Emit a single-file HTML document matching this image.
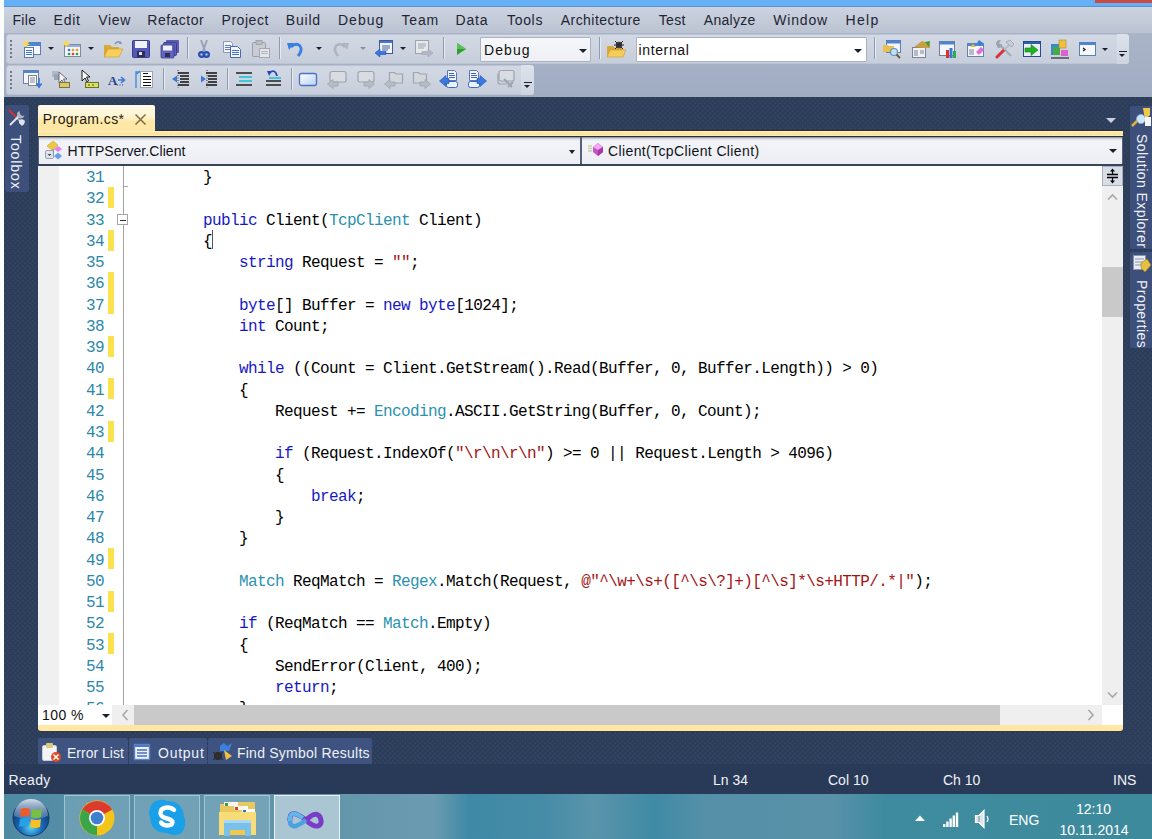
<!DOCTYPE html>
<html><head><meta charset="utf-8">
<style>
*{box-sizing:border-box;margin:0;padding:0}
html,body{width:1152px;height:839px;overflow:hidden}
body{position:relative;background:#2c3d5b;font-family:"Liberation Sans",sans-serif;font-size:14px;color:#1e2432}
.a{position:absolute}
#wcol{left:0;top:0;width:4px;height:839px;background:#fbfcfd}
#title{left:4px;top:0;width:1148px;height:7px;background:#66b0f7;border-bottom:1px solid #5a93c9}
#closeb{left:1095px;top:0;width:57px;height:3px;background:#c94c42}
#menu{left:4px;top:7px;width:1148px;height:26px;background:linear-gradient(#cdd3df,#bbc3d2)}
#menu span{position:absolute;top:4px;font-size:14px;color:#1e2535;line-height:18px}
#tray{left:4px;top:33px;width:1148px;height:64px;background:linear-gradient(#a9b4c7,#a0acc2)}
.tb{position:absolute;border-radius:3px;background:linear-gradient(#d3d9e4,#c7cedb);border:1px solid #bcc4d3}
#dark{left:4px;top:97px;width:1148px;height:697px;background-color:#2c3d5b;
 background-image:radial-gradient(circle at 1.25px 1.25px,#32445f 0.8px,transparent 1.3px),radial-gradient(circle at 3.75px 3.75px,#32445f 0.8px,transparent 1.3px);background-size:5px 5px}

#ttab{left:5px;top:105px;width:24px;height:87px;background:#3d4f7b;border-radius:2px}
.vt{position:absolute;color:#eef1f6;font-size:14px;white-space:nowrap;transform-origin:0 0;transform:rotate(90deg)}
#setab{left:1130px;top:106px;width:22px;height:143px;background:#3d4f7b;border-radius:2px 0 0 2px}
#prtab{left:1130px;top:252px;width:22px;height:96px;background:#3d4f7b;border-radius:2px 0 0 2px}
#dtab{left:38px;top:105px;width:117px;height:27px;border-radius:2px 2px 0 0;background:linear-gradient(#fffbea 0%,#fff3cf 45%,#ffe8a6 60%,#ffe8a6 100%)}
#dtab span{position:absolute;left:4.8px;top:6px;letter-spacing:0.42px;color:#1c1a10;font-size:14px}
#ystrip{left:38px;top:131px;width:1085px;height:5px;background:linear-gradient(#fdf1c6,#fbe59e 35%,#fbe49a 70%,#fdf0c2)}
#nav{left:38px;top:136px;width:1085px;height:30px;background:linear-gradient(#2a3038 0px,#2a3038 1px,#56607a 1px,#56607a 27px,#3a4458 28px)}
.dd{position:absolute;top:1px;height:27px;background:linear-gradient(#7c8596 0px,#dfe3ea 2px,#f3f4f8 4px,#eceef4 100%)}
.dd span{position:absolute;top:6px;font-size:14px;color:#10131a}
.arr{position:absolute;width:0;height:0;border-left:4px solid transparent;border-right:4px solid transparent;border-top:4px solid #1b1f28}
#editor{left:38px;top:166px;width:1085px;height:539px;background:#fff;overflow:hidden}
#margin{left:0;top:0;width:21px;height:539px;background:#f0f0f0}
#code{left:93px;top:2px;font-family:"Liberation Mono",monospace;font-size:16px;letter-spacing:-0.6px;line-height:21.25px;white-space:pre;color:#000}
#lnums{left:44px;top:2px;font-family:"Liberation Mono",monospace;font-size:16px;letter-spacing:-0.6px;line-height:21.25px;white-space:pre;color:#2b88aa;text-align:right;width:22px}
.k{color:#1818c0}.t{color:#2b91af}.s{color:#a31515}
#hsb{left:38px;top:705px;width:1085px;height:20px;background:#efefef}
#ybot{left:38px;top:725px;width:1085px;height:6px;background:#ffe8a6;border-radius:0 0 3px 3px}
#vsb{left:1102px;top:166px;width:21px;height:539px;background:#efefef}
.btab{position:absolute;top:738px;height:26px;background:#3f5380;border-radius:2px 2px 0 0}
.btab span{position:absolute;top:7px;color:#eef1f6;font-size:14px;white-space:nowrap}
.st{position:absolute;top:772px;color:#f0f2f6;font-size:14px}
#taskbar{left:4px;top:794px;width:1148px;height:45px;overflow:hidden;background:linear-gradient(90deg,#4f8aa3 0px,#5a91a8 120px,#6496ab 330px,#6a9bb0 430px,#3f89a6 465px,#468ca7 540px,#5a94aa 590px,#3f8aa5 650px,#5590a8 700px,#5891a8 830px,#3e8ba0 880px,#3f8b9e 1000px,#3d8a9c 1148px)}
.cmb{position:absolute;background:linear-gradient(#f6f7fa,#eef0f5);border:1px solid #a9b2c2;border-radius:1px}
.cmb span{position:absolute;top:4px;font-size:14px;color:#111}
</style></head><body>
<div class="a" id="dark"></div>
<div class="a" id="wcol"></div>
<div class="a" style="left:4px;top:764px;width:1148px;height:30px;background:#293a58"></div>
<div class="a" id="title"></div>
<div class="a" id="closeb"></div>
<div class="a" id="menu">
<span style="left:8.5px;letter-spacing:0.30px">File</span><span style="left:49.6px;letter-spacing:0.73px">Edit</span><span style="left:94.3px;letter-spacing:0.63px">View</span><span style="left:143.3px;letter-spacing:0.49px">Refactor</span><span style="left:217.5px;letter-spacing:0.55px">Project</span><span style="left:281.8px;letter-spacing:0.80px">Build</span><span style="left:334.0px;letter-spacing:1.00px">Debug</span><span style="left:397.4px;letter-spacing:0.87px">Team</span><span style="left:451.6px;letter-spacing:0.80px">Data</span><span style="left:503.0px;letter-spacing:0.68px">Tools</span><span style="left:556.8px;letter-spacing:0.44px">Architecture</span><span style="left:654.7px;letter-spacing:0.33px">Test</span><span style="left:699.8px;letter-spacing:0.28px">Analyze</span><span style="left:769.3px;letter-spacing:0.82px">Window</span><span style="left:841.5px;letter-spacing:1.30px">Help</span>
</div>
<div class="a" id="tray"></div>
<div class="tb" style="left:6px;top:34px;width:1123px;height:30px"></div>
<div class="tb" style="left:6px;top:65px;width:528px;height:30px"></div>
<!--TB-->
<div class="a" style="left:10px;top:40px;width:2px;height:2px;background:#6d7a90"></div><div class="a" style="left:10px;top:44px;width:2px;height:2px;background:#6d7a90"></div><div class="a" style="left:10px;top:48px;width:2px;height:2px;background:#6d7a90"></div><div class="a" style="left:10px;top:52px;width:2px;height:2px;background:#6d7a90"></div><div class="a" style="left:10px;top:56px;width:2px;height:2px;background:#6d7a90"></div>
<svg class="a" style="left:22px;top:39px" width="20" height="20" viewBox="0 0 20 20"><rect x="4.5" y="3.5" width="14" height="12" fill="#f4f8fd" stroke="#5a7fb8"/><rect x="5" y="4" width="13" height="3" fill="#4c86d6"/><rect x="2.5" y="8.5" width="9" height="10" fill="#f4f7fc" stroke="#5c79a8"/><path d="M4 11.5h6M4 13.5h6M4 15.5h6" stroke="#3e70c8"/><path d="M4 0.5 L5 3 L7.5 2 L6 4.5 L8 6 L5.5 6 L4.5 8.5 L3.5 6 L0.5 6.5 L2.5 4.5 L1 2 L3.5 3 Z" fill="#ffd83a"/></svg>
<div class="arr" style="left:48px;top:47px;border-top-color:#1b2030;border-left-width:3.5px;border-right-width:3.5px;border-top-width:3.5px"></div>
<svg class="a" style="left:62px;top:39px" width="20" height="20" viewBox="0 0 20 20"><rect x="2.5" y="5.5" width="16" height="12" fill="#f2f4f8" stroke="#7d8aa0"/><rect x="3" y="6" width="15" height="2" fill="#8fb0e0"/><circle cx="7" cy="11" r="1.3" fill="#4f70d8"/><circle cx="11" cy="11" r="1.3" fill="#e0a020"/><circle cx="15" cy="11" r="1.3" fill="#e0a020"/><circle cx="7" cy="15" r="1.3" fill="#30a040"/><circle cx="11" cy="15" r="1.3" fill="#e04020"/><circle cx="15" cy="15" r="1.3" fill="#30a040"/><path d="M4 0.5 L5 3 L7.5 2 L6 4.5 L8 6 L5.5 6 L4.5 8.5 L3.5 6 L0.5 6.5 L2.5 4.5 L1 2 L3.5 3 Z" fill="#ffd83a"/></svg>
<div class="arr" style="left:88px;top:47px;border-top-color:#1b2030;border-left-width:3.5px;border-right-width:3.5px;border-top-width:3.5px"></div>
<svg class="a" style="left:103px;top:39px" width="20" height="20" viewBox="0 0 20 20"><path d="M1 6h6l2 2h7v10H1z" fill="#d9a93a"/><path d="M1 18 L5 10 H20 L16 18 Z" fill="#f7cf5a" stroke="#c99a2a" stroke-width="0.6"/><path d="M12 5 Q15 1 18 4" stroke="#7f93b8" stroke-width="1.6" fill="none"/><path d="M17 2 l2 3 l-3 0z" fill="#7f93b8"/></svg>
<svg class="a" style="left:131px;top:39px" width="20" height="20" viewBox="0 0 20 20"><rect x="1.5" y="1.5" width="17" height="17" rx="1" fill="#5458b8" stroke="#3a3e8e"/><rect x="4" y="2" width="12" height="7" fill="#f2f3fa"/><rect x="6" y="12" width="8" height="6" fill="#2e2f55"/><rect x="8" y="13" width="3" height="3" fill="#e0e0f0"/></svg>
<svg class="a" style="left:160px;top:39px" width="20" height="20" viewBox="0 0 20 20"><rect x="6" y="1" width="13" height="13" rx="1" fill="#5a5cb4"/><rect x="3.5" y="3.5" width="13" height="13" rx="1" fill="#5b5eb8" stroke="#3d3f8a"/><rect x="1" y="6" width="13" height="13" rx="1" fill="#6366c0" stroke="#3d3f8a" stroke-width="0.8"/><rect x="3" y="6.5" width="9" height="5" fill="#f0f0fa"/><rect x="5" y="14" width="5" height="4" fill="#2e2f55"/></svg>
<div class="a" style="left:187px;top:37px;width:1px;height:22px;background:#8f9bb0;box-shadow:1px 0 0 #e6eaf1"></div>
<svg class="a" style="left:194px;top:39px" width="20" height="20" viewBox="0 0 20 20"><path d="M7 1 L11 12 M13 1 L9 12" stroke="#9aa2b4" stroke-width="2"/><circle cx="7.5" cy="15.5" r="2.8" fill="#3b64c8" stroke="#2a4aa8" stroke-width="1.4"/><circle cx="12.5" cy="15.5" r="2.8" fill="#3b64c8" stroke="#2a4aa8" stroke-width="1.4"/><circle cx="7.5" cy="15.5" r="1" fill="#c8d4f0"/><circle cx="12.5" cy="15.5" r="1" fill="#c8d4f0"/></svg>
<svg class="a" style="left:222px;top:39px" width="20" height="20" viewBox="0 0 20 20"><path d="M1.5 2.5h7l2 2v9h-9z" fill="#f4f6fb" stroke="#8a9ab8"/><path d="M3 6.5h6M3 8.5h6M3 10.5h6" stroke="#5a80c8"/><path d="M8.5 7.5h7l3 3v8h-10z" fill="#f4f6fb" stroke="#4a68a8"/><path d="M10 11.5h7M10 13.5h7M10 15.5h7" stroke="#3f6fc8"/></svg>
<svg class="a" style="left:251px;top:39px" width="20" height="20" viewBox="0 0 20 20"><rect x="1.5" y="3.5" width="13" height="14" rx="1" fill="#c9ccd2" stroke="#9a9ea8"/><rect x="5" y="1.5" width="6" height="4" fill="#b8bcc4" stroke="#9a9ea8" stroke-width="0.8"/><rect x="8.5" y="9.5" width="10" height="9" fill="#e4e6ea" stroke="#a4a8b0"/><path d="M10 12.5h7M10 14.5h7" stroke="#b0b4bc"/></svg>
<div class="a" style="left:279px;top:37px;width:1px;height:22px;background:#8f9bb0;box-shadow:1px 0 0 #e6eaf1"></div>
<svg class="a" style="left:286px;top:39px" width="20" height="20" viewBox="0 0 20 20"><path d="M5 8 Q10 3 14 7 Q17 11 12 17" stroke="#3a80e0" stroke-width="2.8" fill="none"/><path d="M1 4 L8 4 L3 11 Z" fill="#3a80e0"/></svg>
<div class="arr" style="left:316px;top:47px;border-top-color:#1b2030;border-left-width:3.5px;border-right-width:3.5px;border-top-width:3.5px"></div>
<svg class="a" style="left:330px;top:39px" width="20" height="20" viewBox="0 0 20 20"><path d="M15 8 Q10 3 6 7 Q3 11 8 17" stroke="#b0b5c0" stroke-width="2.6" fill="none"/><path d="M19 4 L12 4 L17 11 Z" fill="#b0b5c0"/></svg>
<div class="arr" style="left:360px;top:47px;border-top-color:#8a92a2;border-left-width:3.5px;border-right-width:3.5px;border-top-width:3.5px"></div>
<svg class="a" style="left:374px;top:39px" width="20" height="20" viewBox="0 0 20 20"><rect x="5.5" y="1.5" width="13" height="13" fill="#f4f6fb" stroke="#3f5a98"/><rect x="6" y="2" width="12" height="2" fill="#4a78c8"/><path d="M8 7h8M8 9h8M8 11h6" stroke="#4060a0"/><path d="M1 14 L6 10 V12.5 H12 V15.5 H6 V18 Z" fill="#3a74e0" stroke="#2050b0" stroke-width="0.6"/></svg>
<div class="arr" style="left:400px;top:47px;border-top-color:#1b2030;border-left-width:3.5px;border-right-width:3.5px;border-top-width:3.5px"></div>
<svg class="a" style="left:414px;top:39px" width="20" height="20" viewBox="0 0 20 20"><rect x="1.5" y="1.5" width="13" height="13" fill="#e6e8ec" stroke="#9ca2ae"/><path d="M4 5h8M4 7h8M4 9h6" stroke="#9ca2ae"/><path d="M19 14 L14 10 V12.5 H8 V15.5 H14 V18 Z" fill="#b4b8c2" stroke="#9ca2ae" stroke-width="0.6"/></svg>
<div class="a" style="left:443px;top:37px;width:1px;height:22px;background:#8f9bb0;box-shadow:1px 0 0 #e6eaf1"></div>
<svg class="a" style="left:453px;top:39px" width="20" height="20" viewBox="0 0 20 20"><path d="M4 4 L13 10 L4 16 Z" fill="#2ea02e"/><path d="M4 4 L13 10 L4 10Z" fill="#58c058"/></svg>
<div class="a cmb" style="left:480px;top:37px;width:111px;height:25px"><span style="left:3px;letter-spacing:1.1px">Debug</span><div class="arr" style="left:98px;top:10.5px;border-top-color:#1b2030;border-left-width:4px;border-right-width:4px;border-top-width:4px"></div></div>
<div class="a" style="left:599px;top:37px;width:1px;height:22px;background:#8f9bb0;box-shadow:1px 0 0 #e6eaf1"></div>
<svg class="a" style="left:606px;top:39px" width="20" height="20" viewBox="0 0 20 20"><path d="M1 7h6l2 2h8v9H1z" fill="#d8a838"/><path d="M1 18 L4 11 H20 L17 18 Z" fill="#f5cd5a" stroke="#c99a2a" stroke-width="0.6"/><circle cx="13" cy="6" r="3.2" fill="#3a3a3a"/><path d="M9 2 L17 10 M17 2 L9 10 M8 6 H18" stroke="#2a2a2a" stroke-width="1"/></svg>
<div class="a cmb" style="left:636px;top:37px;width:231px;height:25px;background:#fff"><span style="left:1.5px;letter-spacing:0.63px">internal</span><div class="arr" style="left:216.5px;top:10.5px;border-top-color:#1b2030;border-left-width:4px;border-right-width:4px;border-top-width:4px"></div></div>
<div class="a" style="left:874px;top:37px;width:1px;height:22px;background:#8f9bb0;box-shadow:1px 0 0 #e6eaf1"></div>
<svg class="a" style="left:882px;top:39px" width="20" height="20" viewBox="0 0 20 20"><rect x="4.5" y="1.5" width="14" height="12" fill="#f2f5fb" stroke="#5a7fb8"/><rect x="5" y="2" width="13" height="2.5" fill="#4c86d6"/><path d="M1 6h5l1 1h5v6H1z" fill="#e8c050"/><circle cx="12" cy="13" r="3.5" fill="#bfe0f5" stroke="#6a90b8" stroke-width="1.2"/><path d="M14.5 15.5 L18 19" stroke="#705838" stroke-width="2"/></svg>
<svg class="a" style="left:910px;top:39px" width="20" height="20" viewBox="0 0 20 20"><rect x="2.5" y="8.5" width="13" height="10" fill="#f0f2f6" stroke="#7a8498"/><path d="M4 12h4M4 14h4M4 16h4M10 12h4M10 14h4" stroke="#7a8498"/><path d="M4 8 L12 2 L18 4 L20 2 V9 L14 9 Z" fill="#c8a040"/><path d="M15 3 L20 2 L19 8Z" fill="#3e9a4a"/></svg>
<svg class="a" style="left:938px;top:39px" width="20" height="20" viewBox="0 0 20 20"><rect x="1.5" y="2.5" width="15" height="14" fill="#f4f6fb" stroke="#6a80a8"/><rect x="2" y="3" width="14" height="2.5" fill="#4c86d6"/><rect x="8" y="11" width="3" height="8" fill="#e0302a"/><rect x="11.5" y="9" width="3" height="10" fill="#3878d8"/><rect x="15" y="12" width="3" height="7" fill="#38a848"/></svg>
<svg class="a" style="left:966px;top:39px" width="20" height="20" viewBox="0 0 20 20"><rect x="1.5" y="4.5" width="16" height="13" fill="#f4f6fb" stroke="#6a80a8"/><rect x="2" y="5" width="15" height="2" fill="#4c86d6"/><path d="M3 11h5M3 13h5M3 15h5" stroke="#7a8498"/><path d="M4 8 l3 -3 l3 3z" fill="#e8c040"/><path d="M10 13 L15 8 L18 11 L13 16 Z" fill="#e070d8"/><path d="M13 1 L17 4 L14 7 L11 4Z" fill="#3a80d8"/></svg>
<svg class="a" style="left:994px;top:39px" width="20" height="20" viewBox="0 0 20 20"><path d="M5 5 L17 17" stroke="#a8aeb8" stroke-width="2.4"/><path d="M2 5 a3.5 3.5 0 0 1 5 -3.5 L5 4 L6 6 L8 5 a3.5 3.5 0 0 1 -4 4z" fill="#9aa2b0"/><path d="M3 18 L10 11" stroke="#d8323a" stroke-width="3" stroke-linecap="round"/><path d="M10 11 L15 6" stroke="#b8bec8" stroke-width="2"/><path d="M12 3 L16 1 L20 5 L18 8 L15 6Z" fill="#c8ced8" stroke="#8a92a0" stroke-width="0.6"/></svg>
<svg class="a" style="left:1022px;top:39px" width="20" height="20" viewBox="0 0 20 20"><rect x="1.5" y="2.5" width="17" height="15" fill="#2e5ea8" stroke="#284a88"/><rect x="2" y="5" width="16" height="12" fill="#e8eef8"/><path d="M3 9 H9 V5.5 L16 11 L9 16.5 V13 H3 Z" fill="#20b020" stroke="#188018" stroke-width="0.6"/></svg>
<svg class="a" style="left:1050px;top:39px" width="20" height="20" viewBox="0 0 20 20"><rect x="1" y="5" width="9" height="11" fill="#3a8ad0"/><rect x="3" y="8" width="7" height="8" fill="#48a848"/><rect x="9" y="1" width="7" height="8" fill="#f0c040" stroke="#b08a20" stroke-width="0.6"/><rect x="11" y="11" width="7" height="6" fill="#e060d0"/><rect x="1" y="18" width="18" height="2" fill="#6a6e78"/></svg>
<svg class="a" style="left:1078px;top:39px" width="20" height="20" viewBox="0 0 20 20"><rect x="1.5" y="3.5" width="16" height="13" fill="#f6f8fb" stroke="#5a7fb8"/><rect x="2" y="4" width="15" height="2" fill="#4c86d6"/><path d="M5 9 L7 10.5 L5 12" stroke="#202020" stroke-width="1.3" fill="none"/></svg>
<div class="arr" style="left:1102px;top:48px;border-top-color:#1b2030;border-left-width:3.5px;border-right-width:3.5px;border-top-width:3.5px"></div>
<div class="a" style="left:1117px;top:34px;width:12px;height:30px;background:linear-gradient(#dde2eb,#cfd5e0);border-radius:0 3px 3px 0"></div>
<div class="a" style="left:1119px;top:51px;width:8px;height:1px;background:#1b2030"></div><div class="arr" style="left:1119px;top:54px;border-top-color:#1b2030;border-left-width:3.5px;border-right-width:3.5px;border-top-width:3.5px"></div>
<div class="a" style="left:10px;top:71px;width:2px;height:2px;background:#6d7a90"></div><div class="a" style="left:10px;top:75px;width:2px;height:2px;background:#6d7a90"></div><div class="a" style="left:10px;top:79px;width:2px;height:2px;background:#6d7a90"></div><div class="a" style="left:10px;top:83px;width:2px;height:2px;background:#6d7a90"></div><div class="a" style="left:10px;top:87px;width:2px;height:2px;background:#6d7a90"></div>
<svg class="a" style="left:22px;top:69px" width="20" height="20" viewBox="0 0 20 20"><rect x="1.5" y="1.5" width="15" height="13" fill="#f4f6fb" stroke="#6a80a8"/><rect x="2" y="2" width="14" height="2" fill="#4c86d6"/><rect x="6.5" y="6.5" width="8" height="10" fill="#fff" stroke="#7a8498"/><path d="M8 9h5M8 11h5M8 13h5" stroke="#7a8498"/><path d="M17 9 V17 M14.5 14.5 L17 18 L19.5 14.5" stroke="#3a78d8" stroke-width="1.6" fill="none"/></svg>
<svg class="a" style="left:51px;top:69px" width="20" height="20" viewBox="0 0 20 20"><rect x="1" y="2" width="7" height="6" fill="#b0b8c8"/><rect x="3" y="5" width="7" height="6" fill="#9aa4b8"/><path d="M8 3 L8 14 L11 11 L13 15 L14.5 14 L12.5 10 L16 10 Z" fill="#f0f2f6" stroke="#555" stroke-width="0.8"/><rect x="8.5" y="13.5" width="10" height="5" fill="#d8c870" stroke="#7a7040"/></svg>
<svg class="a" style="left:80px;top:69px" width="20" height="20" viewBox="0 0 20 20"><path d="M2 1 L2 12 L5 9 L7 13 L8.5 12 L6.5 8 L10 8 Z" fill="#fff" stroke="#1a1a1a" stroke-width="1"/><rect x="5.5" y="13.5" width="13" height="5" fill="#d8e060" stroke="#6a7030"/><path d="M8 16h2M12 16h2" stroke="#505020"/></svg>
<svg class="a" style="left:107px;top:69px" width="20" height="20" viewBox="0 0 20 20"><text x="1" y="16" font-family="Liberation Serif" font-weight="bold" font-size="13" fill="#2a3d8a">A</text><path d="M11 11 H17 M14 8 L17.5 11 L14 14" stroke="#3a78d8" stroke-width="1.6" fill="none"/><path d="M10 16h1M12.5 16h1M15 16h1" stroke="#2a3d8a"/></svg>
<svg class="a" style="left:134px;top:69px" width="20" height="20" viewBox="0 0 20 20"><path d="M2 19 V3 H6 M3 5 L6 2" stroke="#3a90e0" stroke-width="1.4" fill="none"/><rect x="6.5" y="2.5" width="12" height="16" fill="#fff" stroke="#9aa4b8"/><path d="M9 4.5h5M9 7.5h8M9 10.5h8M9 13.5h8M9 16.5h8" stroke="#111" stroke-width="1"/></svg>
<div class="a" style="left:163px;top:68px;width:1px;height:22px;background:#8f9bb0;box-shadow:1px 0 0 #e6eaf1"></div>
<svg class="a" style="left:171px;top:69px" width="20" height="20" viewBox="0 0 20 20"><path d="M7 4h11M9 7h9M9 10h9M9 13h9M7 16h11" stroke="#111" stroke-width="1.6"/><path d="M1 10 L6 6.5 V13.5 Z" fill="#3a78d8"/><path d="M7 1 V19" stroke="#333" stroke-dasharray="1 1.5"/></svg>
<svg class="a" style="left:199px;top:69px" width="20" height="20" viewBox="0 0 20 20"><path d="M7 4h11M9 7h9M9 10h9M9 13h9M7 16h11" stroke="#111" stroke-width="1.6"/><path d="M7 10 L2 6.5 V13.5 Z" fill="#3a78d8"/><path d="M8 1 V19" stroke="#333" stroke-dasharray="1 1.5"/></svg>
<div class="a" style="left:227px;top:68px;width:1px;height:22px;background:#8f9bb0;box-shadow:1px 0 0 #e6eaf1"></div>
<svg class="a" style="left:234px;top:69px" width="20" height="20" viewBox="0 0 20 20"><path d="M2 4h16M2 16h16" stroke="#222" stroke-width="1.6"/><path d="M5 8h13M5 12h13" stroke="#40c8d8" stroke-width="2"/></svg>
<svg class="a" style="left:263px;top:69px" width="20" height="20" viewBox="0 0 20 20"><path d="M3 12h15M3 16h15" stroke="#222" stroke-width="1.6"/><path d="M6 4 Q12 -1 14 7" stroke="#2a4ab8" stroke-width="1.8" fill="none"/><path d="M4 2 L9 2 L6 7Z" fill="#2a4ab8"/><path d="M6 9h12" stroke="#40c8d8" stroke-width="2"/></svg>
<div class="a" style="left:291px;top:68px;width:1px;height:22px;background:#8f9bb0;box-shadow:1px 0 0 #e6eaf1"></div>
<svg class="a" style="left:298px;top:69px" width="20" height="20" viewBox="0 0 20 20"><defs><linearGradient id="bmg" x1="0" y1="0" x2="1" y2="1"><stop offset="0" stop-color="#ffffff"/><stop offset="1" stop-color="#b8d0f4"/></linearGradient></defs><rect x="1.5" y="4.5" width="17" height="12" rx="2" fill="url(#bmg)" stroke="#4a70c8" stroke-width="1.3"/></svg>
<svg class="a" style="left:327px;top:69px" width="20" height="20" viewBox="0 0 20 20"><path d="M5 2.5 H17 a2 2 0 0 1 2 2 V11 a2 2 0 0 1 -2 2 H5 a2 2 0 0 1 -2 -2 V4.5 a2 2 0 0 1 2 -2z" fill="#d9dce2" stroke="#9ea4ae" stroke-width="1.2"/><path d="M0.5 15 L6 10.5 V13 H11 V17 H6 V19.5 Z" fill="#b8bcc4" stroke="#9ea4ae" stroke-width="0.8"/></svg>
<svg class="a" style="left:355px;top:69px" width="20" height="20" viewBox="0 0 20 20"><path d="M5 2.5 H17 a2 2 0 0 1 2 2 V11 a2 2 0 0 1 -2 2 H5 a2 2 0 0 1 -2 -2 V4.5 a2 2 0 0 1 2 -2z" fill="#d9dce2" stroke="#9ea4ae" stroke-width="1.2"/><path d="M19.5 15 L14 10.5 V13 H9 V17 H14 V19.5 Z" fill="#b8bcc4" stroke="#9ea4ae" stroke-width="0.8"/></svg>
<svg class="a" style="left:384px;top:69px" width="20" height="20" viewBox="0 0 20 20"><path d="M5.5 3.5h5l1.5 1.5h6.5v9h-13z" fill="#d4d7dd" stroke="#9ea4ae" stroke-width="1.2"/><path d="M0.5 15 L6 10.5 V13 H11 V17 H6 V19.5 Z" fill="#b8bcc4" stroke="#9ea4ae" stroke-width="0.8"/></svg>
<svg class="a" style="left:411px;top:69px" width="20" height="20" viewBox="0 0 20 20"><path d="M2.5 3.5h5l1.5 1.5h6.5v9h-13z" fill="#d4d7dd" stroke="#9ea4ae" stroke-width="1.2"/><path d="M19.5 15 L14 10.5 V13 H9 V17 H14 V19.5 Z" fill="#b8bcc4" stroke="#9ea4ae" stroke-width="0.8"/></svg>
<svg class="a" style="left:439px;top:69px" width="20" height="20" viewBox="0 0 20 20"><path d="M8.5 1.5h7l2 2v8h-9z" fill="#f4f6fb" stroke="#5a78b8"/><path d="M10 4.5h5M10 6.5h6M10 8.5h6" stroke="#3a68c0"/><rect x="7.5" y="12.5" width="11" height="6" rx="2" fill="#eaf2fc" stroke="#3a68c0"/><path d="M0.5 12 L7 6.5 V9.5 H10 V14.5 H7 V17.5 Z" fill="#3a7ae0" stroke="#2050b0" stroke-width="0.6"/></svg>
<svg class="a" style="left:467px;top:69px" width="20" height="20" viewBox="0 0 20 20"><path d="M2.5 1.5h7l2 2v8h-9z" fill="#f4f6fb" stroke="#5a78b8"/><path d="M4 4.5h5M4 6.5h6M4 8.5h6" stroke="#3a68c0"/><rect x="1.5" y="12.5" width="11" height="6" rx="2" fill="#eaf2fc" stroke="#3a68c0"/><path d="M19.5 12 L13 6.5 V9.5 H10 V14.5 H13 V17.5 Z" fill="#3a7ae0" stroke="#2050b0" stroke-width="0.6"/></svg>
<svg class="a" style="left:495px;top:69px" width="20" height="20" viewBox="0 0 20 20"><path d="M6 1.5 H17 a2 2 0 0 1 2 2 V10 a2 2 0 0 1 -2 2 H6 a2 2 0 0 1 -2 -2 V3.5 a2 2 0 0 1 2 -2z" fill="#d9dce2" stroke="#9ea4ae" stroke-width="1.2"/><path d="M3 4.5 V13 a2 2 0 0 0 2 2 H12" stroke="#9ea4ae" stroke-width="1.2" fill="none"/><path d="M9 10 L17 18 M13 18 L18 13" stroke="#9ea4ae" stroke-width="2"/></svg>
<div class="a" style="left:521px;top:65px;width:13px;height:30px;background:linear-gradient(#dde2eb,#cfd5e0);border-radius:0 3px 3px 0"></div>
<div class="a" style="left:524px;top:82px;width:8px;height:1px;background:#1b2030"></div><div class="arr" style="left:524px;top:85px;border-top-color:#1b2030;border-left-width:3.5px;border-right-width:3.5px;border-top-width:3.5px"></div>
<!--/TB-->

<div class="a" id="ttab"><div class="vt" style="left:18.5px;top:29.5px;letter-spacing:0.9px">Toolbox</div></div>
<div class="a" id="setab"><div class="vt" style="left:20px;top:27.5px;letter-spacing:0.45px">Solution Explorer</div></div>
<div class="a" id="prtab"><div class="vt" style="left:20px;top:27.5px;letter-spacing:0.45px">Properties</div></div>
<div class="a" id="dtab"><span>Program.cs*</span></div>
<div class="a" id="ystrip"></div>
<div class="a" style="left:155px;top:130px;width:968px;height:1px;background:#2a2f36"></div>
<div class="a" id="nav">
 <div class="dd" style="left:1px;width:541px"><span style="left:28.5px;letter-spacing:0.08px">HTTPServer.Client</span><div class="arr" style="left:530px;top:13px;border-left-width:3.5px;border-right-width:3.5px;border-top-width:4px"></div></div>
 <div class="dd" style="left:544px;width:540px"><span style="left:26px;letter-spacing:0.38px">Client(TcpClient Client)</span><div class="arr" style="left:527px;top:12px"></div></div>
</div>
<div class="a" id="editor">
 <div class="a" id="margin"></div>
 <div class="a" id="lnums">31
32
33
34
35
36
37
38
39
40
41
42
43
44
45
46
47
48
49
50
51
52
53
54
55
56</div>
 
<div class="a" style="left:69.5px;top:21.15px;width:6px;height:21px;background:#fae24e"></div>
<div class="a" style="left:69.5px;top:63.65px;width:6px;height:21px;background:#fae24e"></div>
<div class="a" style="left:69.5px;top:106.15px;width:6px;height:21px;background:#fae24e"></div>
<div class="a" style="left:69.5px;top:127.40px;width:6px;height:21px;background:#fae24e"></div>
<div class="a" style="left:69.5px;top:169.90px;width:6px;height:21px;background:#fae24e"></div>
<div class="a" style="left:69.5px;top:212.40px;width:6px;height:21px;background:#fae24e"></div>
<div class="a" style="left:69.5px;top:254.90px;width:6px;height:21px;background:#fae24e"></div>
<div class="a" style="left:69.5px;top:382.40px;width:6px;height:21px;background:#fae24e"></div>
<div class="a" style="left:69.5px;top:424.90px;width:6px;height:21px;background:#fae24e"></div>
<div class="a" style="left:69.5px;top:467.40px;width:6px;height:21px;background:#fae24e"></div>
<div class="a" style="left:84.5px;top:0;width:1.5px;height:48px;background:#a5a5a5"></div>
<div class="a" style="left:85px;top:20px;width:5px;height:1px;background:#a5a5a5"></div>
<div class="a" style="left:79px;top:48px;width:11px;height:11px;border:1px solid #a5a5a5;background:#fff"></div>
<div class="a" style="left:81.5px;top:53.5px;width:6px;height:1.2px;background:#333"></div>
<div class="a" style="left:84.5px;top:59px;width:1.5px;height:480px;background:#a5a5a5"></div>
<div class="a" style="left:173.5px;top:64px;width:1.3px;height:19px;background:#555"></div>
 <div class="a" id="code">        }

        <span class=k>public</span> Client(<span class=t>TcpClient</span> Client)
        {
            <span class=k>string</span> Request = <span class=s>""</span>;

            <span class=k>byte</span>[] Buffer = <span class=k>new</span> <span class=k>byte</span>[1024];
            <span class=k>int</span> Count;

            <span class=k>while</span> ((Count = Client.GetStream().Read(Buffer, 0, Buffer.Length)) &gt; 0)
            {
                Request += <span class=t>Encoding</span>.ASCII.GetString(Buffer, 0, Count);

                <span class=k>if</span> (Request.IndexOf(<span class=s>"\r\n\r\n"</span>) &gt;= 0 || Request.Length &gt; 4096)
                {
                    <span class=k>break</span>;
                }
            }

            <span class=t>Match</span> ReqMatch = <span class=t>Regex</span>.Match(Request, <span class=s>@"^\w+\s+([^\s\?]+)[^\s]*\s+HTTP/.*|"</span>);

            <span class=k>if</span> (ReqMatch == <span class=t>Match</span>.Empty)
            {
                SendError(Client, 400);
                <span class=k>return</span>;
            }</div>
</div>
<div class="a" id="vsb">
 <div class="a" style="left:0;top:0;width:21px;height:20px;background:#d9dde6;border:1px solid #a9b1c0"></div>
 <svg class="a" style="left:3px;top:2px" width="15" height="16" viewBox="0 0 15 16"><path d="M2 6.5h11M2 9.5h11" stroke="#000" stroke-width="1.4"/><path d="M7.5 0.5 L10 3.5 H5 Z M7.5 15.5 L10 12.5 H5 Z" fill="#000"/><path d="M7.5 3 V6 M7.5 10 V13" stroke="#000" stroke-width="1.2"/></svg>
 <svg class="a" style="left:5px;top:27px" width="11" height="8" viewBox="0 0 11 8"><path d="M1 6.5 L5.5 2 L10 6.5" stroke="#a8a8a8" stroke-width="1.6" fill="none"/></svg>
 <div class="a" style="left:0;top:101px;width:21px;height:50px;background:#c9c9c9"></div>
 <svg class="a" style="left:5px;top:525px" width="11" height="8" viewBox="0 0 11 8"><path d="M1 1.5 L5.5 6 L10 1.5" stroke="#a8a8a8" stroke-width="1.6" fill="none"/></svg>
</div>
<div class="a" id="hsb">
 <div class="a" style="left:0;top:0;width:74px;height:20px;background:#fff"><span class="a" style="left:4px;top:2px;font-size:14px;color:#111;letter-spacing:0.45px">100 %</span><div class="arr" style="left:63.5px;top:9px;border-left-width:4px;border-right-width:4px;border-top-width:4px"></div></div>
 <svg class="a" style="left:83px;top:4px" width="8" height="12" viewBox="0 0 8 12"><path d="M6.5 1 L2 6 L6.5 11" stroke="#a8a8a8" stroke-width="1.6" fill="none"/></svg>
 <div class="a" style="left:96px;top:0;width:866px;height:20px;background:#c9c9c9"></div>
 <svg class="a" style="left:1049px;top:4px" width="8" height="12" viewBox="0 0 8 12"><path d="M1.5 1 L6 6 L1.5 11" stroke="#a8a8a8" stroke-width="1.6" fill="none"/></svg>
 <div class="a" style="left:1064px;top:0;width:21px;height:20px;background:#fff"></div>
</div>
<div class="a" id="ybot"></div>
<div class="a" style="left:40px;top:731px;width:1081px;height:1px;background:#363a3e"></div>
<div class="btab" style="left:38px;width:90px"><span style="left:29px">Error List</span></div>
<div class="btab" style="left:129px;width:78px"><span style="left:29px;letter-spacing:0.75px">Output</span></div>
<div class="btab" style="left:208px;width:164px"><span style="left:29px;letter-spacing:0.23px">Find Symbol Results</span></div>
<div class="st" style="left:8.5px;letter-spacing:0.35px">Ready</div>
<div class="st" style="left:713px">Ln 34</div>
<div class="st" style="left:828px">Col 10</div>
<div class="st" style="left:943px">Ch 10</div>
<div class="st" style="left:1113px">INS</div>
<svg class="a" style="left:134px;top:113px" width="13" height="13" viewBox="0 0 13 13"><path d="M1.5 1.5 L11.5 11.5 M11.5 1.5 L1.5 11.5" stroke="#7a6c45" stroke-width="1.5"/></svg>
<div class="a" style="left:1106px;top:118px;width:0;height:0;border-left:5px solid transparent;border-right:5px solid transparent;border-top:5px solid #c8d0de"></div>
<svg class="a" style="left:7px;top:108px" width="20" height="20" viewBox="0 0 20 20"><path d="M2 2 L9 9" stroke="#c8333a" stroke-width="2.4"/><path d="M9 9 L13 13" stroke="#9aa4b4" stroke-width="2"/><path d="M3 17 L13 7" stroke="#dfe4ec" stroke-width="2"/><path d="M12.5 3 a3.8 3.8 0 1 0 5 4.5 l-2.5 0.5 l-2 -2 z" fill="#aeb7c4"/><path d="M12 12 Q16 10 18 13 Q18 16 15 18 L12 15 Z" fill="#dfe3ea"/></svg>
<svg class="a" style="left:1131px;top:107px" width="20" height="20" viewBox="0 0 20 20"><path d="M12 1 L19 1 L19 8 L14 13 Z" fill="#f0c848"/><circle cx="10" cy="12" r="4.5" fill="#cfe6fa" stroke="#8ab0d8"/><rect x="14" y="10" width="6" height="9" fill="#f4f6fa"/><path d="M1 19 L6 14" stroke="#e0b040" stroke-width="2.5"/></svg>
<svg class="a" style="left:1131px;top:253px" width="20" height="20" viewBox="0 0 20 20"><rect x="2.5" y="2.5" width="12" height="14" fill="#e8ecf4" stroke="#8a94a8"/><path d="M4 6h9M4 9h9M4 12h9" stroke="#8a94a8"/><path d="M10 10 L16 6 L20 12 L14 19 L10 15 Z" fill="#e8c040" stroke="#a08020" stroke-width="0.6"/></svg>
<svg class="a" style="left:44px;top:140px" width="20" height="20" viewBox="0 0 20 20"><path d="M3 6 L9 1 L14 5 L8 10 Z" fill="#f0c840" stroke="#c8a030" stroke-width="0.6"/><rect x="1.5" y="10.5" width="8" height="8" rx="1.5" fill="#dfe3ea" stroke="#9aa2b0"/><path d="M3.5 14 h4 l-2 2z" fill="#444"/><path d="M10 9 L14 6 L18 9 L14 12Z" fill="#e880e8"/><path d="M10 16 L14 12.5 L18 16 L14 19.5Z" fill="#6aa0e8"/><path d="M9.5 9 V16" stroke="#8a94a4"/></svg>
<svg class="a" style="left:587px;top:141px" width="18" height="18" viewBox="0 0 18 18"><path d="M1 5h4M1 7.5h4M1 10h4" stroke="#c8d0a8" stroke-width="1.3"/><path d="M6 6 L11 2 L16 6 L16 11 L11 15 L6 11 Z" fill="#c850c8"/><path d="M6 6 L11 2 L16 6 L11 9 Z" fill="#f0a8f0"/><path d="M11 9 L16 6 L16 11 L11 15Z" fill="#a838a8"/></svg>
<svg class="a" style="left:41px;top:742px" width="21" height="21" viewBox="0 0 21 21"><rect x="1.5" y="3.5" width="14" height="15" rx="1.5" fill="#f2f4f8" stroke="#c8ccd6"/><rect x="5" y="1" width="7" height="5" rx="1" fill="#d8c880"/><circle cx="15" cy="15" r="5" fill="#e04a20"/><path d="M12.5 12.5 L17.5 17.5 M17.5 12.5 L12.5 17.5" stroke="#fff" stroke-width="1.5"/></svg>
<svg class="a" style="left:133px;top:743px" width="18" height="18" viewBox="0 0 18 18"><rect x="1.5" y="1.5" width="15" height="15" fill="#eef2f8" stroke="#5a80c8" stroke-width="1.4"/><rect x="2" y="2" width="14" height="2" fill="#4a7ad0"/><path d="M4 7h10M4 10h10M4 13h10" stroke="#4a70b8" stroke-width="1.3"/></svg>
<svg class="a" style="left:212px;top:742px" width="21" height="21" viewBox="0 0 21 21"><path d="M8 4 L12 1 L15 4 L20 1 L17 9 L8 9 Z" fill="#3a80e0"/><path d="M12 8 L20 14 L14 18 Z" fill="#f0c040"/><circle cx="6" cy="14" r="4" fill="#2a2a2a"/><path d="M1 10 L11 18 M11 10 L1 18" stroke="#333" stroke-width="1.3"/></svg>
<div class="a" id="taskbar">
 <div class="a" style="left:60px;top:1px;width:66px;height:44px;background:rgba(170,200,215,0.28);border:1px solid rgba(200,225,235,0.55);border-bottom:none"></div>
 <div class="a" style="left:130px;top:1px;width:66px;height:44px;background:rgba(170,200,215,0.28);border:1px solid rgba(200,225,235,0.55);border-bottom:none"></div>
 <div class="a" style="left:200px;top:1px;width:66px;height:44px;background:rgba(170,200,215,0.28);border:1px solid rgba(200,225,235,0.55);border-bottom:none"></div>
 <div class="a" style="left:270px;top:1px;width:66px;height:44px;background:rgba(215,228,235,0.62);border:1px solid rgba(240,248,252,0.85);border-bottom:none"></div>
 <svg class="a" style="left:8px;top:5px" width="38" height="38" viewBox="0 0 38 38">
  <defs><radialGradient id="orb" cx="50%" cy="75%" r="60%"><stop offset="0" stop-color="#5ad8f8"/><stop offset="0.5" stop-color="#1a6ab8"/><stop offset="1" stop-color="#0e3a78"/></radialGradient>
  <linearGradient id="orbg" x1="0" y1="0" x2="0" y2="1"><stop offset="0" stop-color="#e8eef4" stop-opacity="0.9"/><stop offset="1" stop-color="#9ab8d0" stop-opacity="0.3"/></linearGradient></defs>
  <circle cx="19" cy="19" r="18" fill="url(#orb)" stroke="#1a3a68" stroke-width="1"/>
  <path d="M2 17 A17 17 0 0 1 36 17 Q19 24 2 17Z" fill="url(#orbg)"/>
  <path d="M9 10 Q13 8 18 10 L17 18 Q13 16 8 18 Z" fill="#f05a28"/>
  <path d="M20 10 Q25 12 30 10 L29 18 Q24 20 19 18 Z" fill="#7ac040"/>
  <path d="M8 20 Q13 18 17 20 L16 28 Q12 26 7 28 Z" fill="#28a0e8"/>
  <path d="M19 20 Q24 22 29 20 L28 28 Q23 30 18 28 Z" fill="#f8c020"/>
 </svg>
 <svg class="a" style="left:75px;top:6px" width="36" height="36" viewBox="0 0 36 36">
  <circle cx="18" cy="18" r="17.5" fill="#f3c41a"/>
  <path d="M18 18 L3.2 9.5 A17.5 17.5 0 0 1 33.2 9.5 Z" fill="#dd3a2e"/>
  <path d="M18 18 L3.2 9.5 A17.5 17.5 0 0 0 18 35.5 Z" fill="#3aa648"/>
  <circle cx="18" cy="18" r="8" fill="#fff"/><circle cx="18" cy="18" r="6.3" fill="#3f7fd0"/>
 </svg>
 <svg class="a" style="left:145px;top:5px" width="37" height="37" viewBox="0 0 37 37">
  <path d="M10 1 Q15 0 18 2 Q34 2 35 18 Q37 22 36 27 Q34 36 26 36 Q22 36 18 34 Q2 34 1 18 Q-1 14 1 9 Q3 2 10 1Z" fill="#1aa0e8"/>
  <path d="M25 11 Q22 8 17.5 8.5 Q11 9.5 11.5 14.5 Q12 18 18 19.5 Q24 21 23.5 23.5 Q23 26.5 18.5 26.5 Q14 26.5 12 23.5" stroke="#fff" stroke-width="4.4" fill="none" stroke-linecap="round"/>
 </svg>
 <svg class="a" style="left:214px;top:5px" width="39" height="39" viewBox="0 0 39 39">
  <path d="M2 5 H14 L16 3 H37 V32 H2 Z" fill="#e8c860"/>
  <rect x="6" y="3" width="14" height="4" fill="#fafaf2"/><rect x="7" y="4" width="3" height="3" fill="#3aa040"/>
  <rect x="16" y="7" width="14" height="4" fill="#fafaf2"/><rect x="17" y="8" width="3" height="3" fill="#e04020"/>
  <rect x="24" y="10" width="13" height="4" fill="#fafaf2"/><rect x="25" y="11" width="3" height="3" fill="#2a70d0"/>
  <path d="M1 13 H38 V36 H1 Z" fill="#f8dc78"/>
  <path d="M6 21 H33 V37 H27 V31 H12 V37 H6 Z" fill="#7ac0e8"/>
  <path d="M6 21 H33 V24 H6Z" fill="#a8d8f4"/>
  <rect x="12" y="31" width="15" height="5" fill="#f0c850"/>
 </svg>
 <svg class="a" style="left:283px;top:15px" width="38" height="21" viewBox="0 0 38 21">
  <path d="M3 12 Q2 3 9 5 Q14 7 19 11 Q26 18 31 17 Q36 15 33 8 Q30 3 24 7 L20 10" stroke="#7a3cc8" stroke-width="5" fill="none"/>
  <path d="M19 11 Q14 15 9 17 Q3 18 3 12" stroke="#4aa0e0" stroke-width="4.5" fill="none"/>
  <path d="M3 12 Q2 3 9 5 Q12 6 16 9" stroke="#60b8ea" stroke-width="4" fill="none"/>
 </svg>
 <svg class="a" style="left:911px;top:21px" width="10" height="7" viewBox="0 0 10 7"><path d="M0 6 L5 0.5 L10 6Z" fill="#fff"/></svg>
 <svg class="a" style="left:939px;top:17px" width="16" height="17" viewBox="0 0 16 17"><path d="M0 13h2.4v3H0zM3.2 10.5h2.4V16H3.2zM6.4 7.5h2.4V16H6.4zM9.6 4.5h2.4V16H9.6zM12.8 1.5h2.4V16h-2.4z" fill="#fff"/></svg>
 <svg class="a" style="left:970px;top:15px" width="17" height="20" viewBox="0 0 17 20"><path d="M1.5 6.5 H5 L10 1.5 V18.5 L5 13.5 H1.5Z" fill="#dfe6ea" stroke="#fff" stroke-width="1.2"/><path d="M5 7 V13" stroke="#6a8a96" stroke-width="1"/><path d="M13 7 Q15 10 13 13" stroke="#fff" stroke-width="1.2" fill="none"/></svg>
 <span class="a" style="left:1005px;top:17.5px;color:#fff;font-size:14px">ENG</span>
 <span class="a" style="left:1072px;top:6.5px;color:#fff;font-size:14px">12:10</span>
 <span class="a" style="left:1055.5px;top:28px;color:#fff;font-size:14px">10.11.2014</span>
</div>
</body></html>
